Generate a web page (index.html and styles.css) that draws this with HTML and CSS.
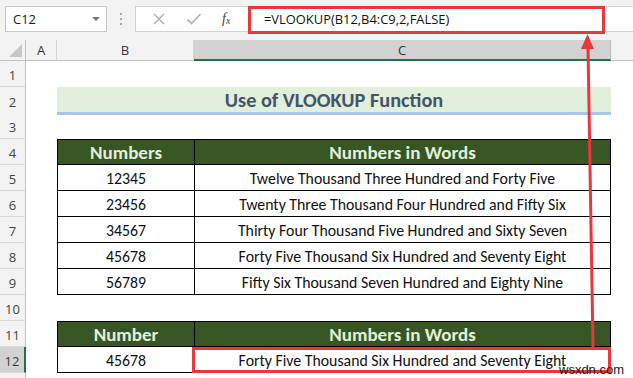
FILE: index.html
```html
<!DOCTYPE html>
<html>
<head>
<meta charset="utf-8">
<link rel="stylesheet" href="styles.css">
</head>
<body>
<div class="app">
  <div class="toolbar">
    <div class="namebox"><span class="nb-text">C12</span><span class="caret"></span></div>
    <div class="dots"><i></i><i></i><i></i></div>
    <div class="fbar">
      <div class="fbtns">
        <svg class="ico" width="14" height="14" viewBox="0 0 14 14"><path d="M2 2 L12 12 M12 2 L2 12" stroke="#b4b4b4" stroke-width="1.6" fill="none"/></svg>
        <svg class="ico" width="16" height="14" viewBox="0 0 16 14"><path d="M1.5 7.5 L5.5 11.5 L14.5 2" stroke="#b4b4b4" stroke-width="1.8" fill="none"/></svg>
        <span class="fx">f<sub>x</sub></span>
      </div>
      <div class="finput">=VLOOKUP(B12,B4:C9,2,FALSE)</div>
    </div>
  </div>
  <div class="sheet">
    <div class="row colhead">
      <div class="corner"><svg width="13" height="13" viewBox="0 0 13 13"><path d="M13 0 L13 13 L0 13 Z" fill="#c8c8c8"/></svg></div>
      <div class="ch">A</div>
      <div class="ch">B</div>
      <div class="ch sel">C</div>
      <div class="ch last"></div>
    </div>
    <div class="row"><div class="rh">1</div><div></div><div></div><div></div><div></div></div>
    <div class="row"><div class="rh">2</div><div></div><div class="title">Use of VLOOKUP Function</div><div></div></div>
    <div class="row"><div class="rh">3</div><div></div><div></div><div></div><div></div></div>
    <div class="row"><div class="rh">4</div><div></div><div class="th tb first">Numbers</div><div class="th tc first">Numbers in Words</div><div></div></div>
    <div class="row"><div class="rh">5</div><div></div><div class="td tb">12345</div><div class="td tc">Twelve Thousand Three Hundred and Forty Five</div><div></div></div>
    <div class="row"><div class="rh">6</div><div></div><div class="td tb">23456</div><div class="td tc">Twenty Three Thousand Four Hundred and Fifty Six</div><div></div></div>
    <div class="row"><div class="rh">7</div><div></div><div class="td tb">34567</div><div class="td tc">Thirty Four Thousand Five Hundred and Sixty Seven</div><div></div></div>
    <div class="row"><div class="rh">8</div><div></div><div class="td tb">45678</div><div class="td tc">Forty Five Thousand Six Hundred and Seventy Eight</div><div></div></div>
    <div class="row"><div class="rh">9</div><div></div><div class="td tb">56789</div><div class="td tc">Fifty Six Thousand Seven Hundred and Eighty Nine</div><div></div></div>
    <div class="row"><div class="rh">10</div><div></div><div></div><div></div><div></div></div>
    <div class="row"><div class="rh">11</div><div></div><div class="th tb first">Number</div><div class="th tc first">Numbers in Words</div><div></div></div>
    <div class="row"><div class="rh selrow">12</div><div></div><div class="td tb">45678</div><div class="td tc">Forty Five Thousand Six Hundred and Seventy Eight</div><div></div></div>
    <div class="row"><div class="rh"></div><div></div><div></div><div></div><div></div></div>
  </div>
  <svg class="annot" width="633" height="378" viewBox="0 0 633 378">
    <rect x="249.5" y="7.5" width="354" height="25" fill="none" stroke="#e8383d" stroke-width="3"/>
    <rect x="193.5" y="348.5" width="416" height="23" fill="none" stroke="#e8383d" stroke-width="3"/>
    <line x1="588" y1="47" x2="593" y2="347" stroke="#e8383d" stroke-width="3"/>
    <polygon points="587.5,34 581,49 594,49" fill="#e8383d"/>
  </svg>
  <div class="watermark">wsxdn.com</div>
</div>
</body>
</html>
```

FILE: styles.css
```css
* { box-sizing: border-box; }
html, body { margin: 0; padding: 0; }
body { width: 633px; height: 378px; overflow: hidden; background: #fff; }

.app {
  position: relative;
  width: 633px;
  height: 378px;
  overflow: hidden;
  font-family: Carlito, Lato, "Liberation Sans", sans-serif;
}

.toolbar {
  height: 40px;
  background: #f3f3f3;
  display: flex;
  align-items: flex-start;
  padding-top: 6px;
  padding-left: 5px;
}

.namebox {
  width: 102px;
  height: 26px;
  background: #fff;
  border: 1px solid #c6c6c6;
  display: flex;
  align-items: center;
  justify-content: space-between;
  padding: 0 6px 0 7px;
  font-family: "Open Sans", "Noto Sans", sans-serif;
  font-size: 13px;
  color: #222;
}

.caret {
  width: 0; height: 0;
  border-left: 4px solid transparent;
  border-right: 4px solid transparent;
  border-top: 4px solid #777;
}

.dots {
  width: 28px;
  height: 26px;
  display: flex;
  flex-direction: column;
  align-items: center;
  justify-content: center;
  gap: 3px;
}
.dots i {
  display: block;
  width: 2px; height: 2px;
  background: #a8a8a8;
}

.fbar {
  flex: 1;
  height: 26px;
  display: flex;
  background: #fff;
  border: 1px solid #d2d2d2;
  border-right: none;
}

.fbtns {
  width: 113px;
  display: flex;
  align-items: center;
  padding-left: 16px;
  gap: 20px;
  border-right: 1px solid #d2d2d2;
}
.fbtns .ico { display: block; }
.fx {
  font-family: "Liberation Serif", serif;
  font-style: italic;
  font-size: 14px;
  color: #444;
}
.fx sub { font-size: 10px; vertical-align: -1px; }

.finput {
  flex: 1;
  padding-left: 15px;
  display: flex;
  align-items: center;
  font-family: "Open Sans", "Noto Sans", sans-serif;
  font-size: 12.9px;
  color: #111;
}

.sheet { display: flex; flex-direction: column; }

.row {
  display: grid;
  grid-template-columns: 26px 31px 137px 417px 22px;
  height: 26px;
}

.colhead { height: 21px; background: #f3f3f3; }
.colhead .ch, .colhead .corner {
  border-right: 1px solid #d5d5d5;
  border-bottom: 1px solid #c2c2c2;
  display: flex;
  align-items: center;
  justify-content: center;
  font-family: "Open Sans", "Noto Sans", sans-serif;
  font-size: 13px;
  color: #333;
}
.colhead .corner { justify-content: flex-end; align-items: flex-end; padding: 0 3px 3px 0; border-right-color: #c2c2c2; }
.colhead .ch.sel {
  background: #d2d2d2;
  border-bottom: 2px solid #217346;
  border-right-color: #bdbdbd;
}
.colhead .ch.last { border-right: none; }

.rh {
  background: #f3f3f3;
  border-right: 1px solid #c2c2c2;
  border-bottom: 1px solid #d8d8d8;
  display: flex;
  align-items: center;
  justify-content: center;
  font-family: "Open Sans", "Noto Sans", sans-serif;
  font-size: 13px;
  color: #444;
  padding-top: 2px;
}
.rh.selrow {
  background: #d2d2d2;
  border-right: 2px solid #217346;
  color: #3b3b3b;
}

.title {
  grid-column: 3 / 5;
  background: #e2efda;
  border-bottom: 3px solid #a9c6e6;
  display: flex;
  align-items: center;
  justify-content: center;
  font-weight: bold;
  font-size: 20.3px;
  color: #44546a;
  padding-top: 1px;
}

.th, .td {
  display: flex;
  align-items: center;
  justify-content: center;
  border-left: 1px solid #000;
  border-bottom: 1px solid #000;
  white-space: nowrap;
}
.tc { border-right: 1px solid #000; }
.th.first { border-top: 1px solid #000; }

.th {
  background: #375623;
  color: #e2efda;
  font-weight: bold;
  font-size: 19px;
  padding-top: 1px;
}
.td {
  font-size: 15.8px;
  color: #111;
  padding-top: 2px;
}

.annot {
  position: absolute;
  left: 0; top: 0;
  pointer-events: none;
}

.watermark {
  position: absolute;
  left: 559px;
  top: 362px;
  font-family: "Liberation Sans", sans-serif;
  font-size: 13px;
  color: #1a1a1a;
}
```
